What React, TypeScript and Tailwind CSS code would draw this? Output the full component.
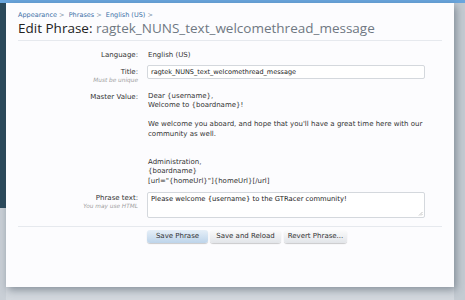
import React from "react";

const masterLines: string[] = [
  "Dear {username},",
  "Welcome to {boardname}!",
  "",
  "We welcome you aboard, and hope that you'll have a great time here with our",
  "community as well.",
  "",
  "",
  "Administration,",
  "{boardname}",
  '[url="{homeUrl}"]{homeUrl}[/url]',
];

const Row: React.FC<{
  label: string;
  hint?: string;
  children: React.ReactNode;
  className?: string;
  labelClass?: string;
}> = ({ label, hint, children, className, labelClass }) => (
  <div className={"flex pr-[17px] " + (className || "")}>
    <div className={"w-[129px] shrink-0 pr-[9px] text-right " + (labelClass || "")}>
      <div className="text-[7px] leading-[10px] text-[#333]">{label}</div>
      {hint && <div className="text-[5.8px] leading-[7px] italic text-[#a0a0a0]">{hint}</div>}
    </div>
    <div className="flex-1">{children}</div>
  </div>
);

const Button: React.FC<{ primary?: boolean; className?: string; children: React.ReactNode }> = ({
  primary,
  className,
  children,
}) => (
  <button
    className={
      "h-[13px] rounded-[3px] text-[7px] text-[#333] shadow-[0_1px_1px_rgba(0,0,0,0.2)] bg-gradient-to-b " +
      (primary ? "from-[#e6eff8] to-[#bdd4ea] " : "from-[#fbfbfb] to-[#e2e5e9] ") +
      (className || "")
    }
  >
    {children}
  </button>
);

const App: React.FC = () => {
  return (
    <div className="flex flex-col w-[465px] h-[300px] overflow-hidden bg-[#d3d8de] font-['DejaVu_Sans',sans-serif]">
      <div className="h-[3px] shrink-0 bg-[#6aa6de]" />
      <div className="flex flex-1">
        {/* page behind the overlay */}
        <div className="flex flex-col w-[6px] shrink-0">
          <div className="h-[205px] bg-[#2c4a5c]" />
          <div className="flex-1 bg-[#c9cfd6]" />
        </div>

        <div className="relative z-10 w-[448px] h-[284px] shrink-0 bg-[#fcfcfe] shadow-[2px_3px_8px_rgba(40,55,70,0.45)] px-[12px]">
          <div className="pt-[8px] text-[6.5px] leading-[9px] text-[#3b6fa6]">
            Appearance <span className="text-[#7a8ea3]">&gt;</span>&nbsp; Phrases{" "}
            <span className="text-[#7a8ea3]">&gt;</span>&nbsp; English (US){" "}
            <span className="text-[#7a8ea3]">&gt;</span>
          </div>
          <h1 className="font-['Open_Sans',sans-serif] text-[13.5px] leading-[17px] text-[#222] border-b border-[#e6e9ee] pb-[3px] whitespace-nowrap">
            Edit Phrase: <span className="text-[#6f7882]">ragtek_NUNS_text_welcomethread_message</span>
          </h1>

          <Row label="Language:" className="mt-[9px]">
            <div className="pl-[1px] text-[7px] leading-[10px] text-[#333]">English (US)</div>
          </Row>

          <Row label="Title:" hint="Must be unique" className="mt-[5px]" labelClass="pt-[2px]">
            <div className="h-[14px] border border-[#d4d8dd] rounded-[2px] bg-white px-[3px] text-[6.5px] leading-[12px] text-[#222]">
              ragtek_NUNS_text_welcomethread_message
            </div>
          </Row>

          <Row label="Master Value:" className="mt-[8px]">
            <div className="pl-[1px] text-[7px] leading-[9.4px] text-[#333]">
              {masterLines.map((l, i) => (
                <div key={i} className="h-[9.4px] whitespace-nowrap">
                  {l}
                </div>
              ))}
            </div>
          </Row>

          <Row label="Phrase text:" hint="You may use HTML" className="mt-[6px]" labelClass="pt-[1px]">
            <div className="relative h-[26px] border border-[#d4d8dd] rounded-[2px] bg-white px-[3px] pt-[2px] text-[6.8px] leading-[8px] text-[#222]">
              Please welcome {"{username}"} to the GTRacer community!
              <svg className="absolute right-[1px] bottom-[1px]" width="5" height="5" viewBox="0 0 5 5">
                <path d="M4.5 1 L1 4.5 M4.5 3 L3 4.5" stroke="#aaa" strokeWidth="0.7" />
              </svg>
            </div>
          </Row>

          <div className="mt-[8px] border-t border-[#e6e9ee]" />

          <div className="flex gap-[2px] pl-[129px] mt-[3px]">
            <Button primary className="w-[61px]">
              Save Phrase
            </Button>
            <Button className="w-[71px]">Save and Reload</Button>
            <Button className="ml-[1px] w-[63px]">Revert Phrase...</Button>
          </div>
        </div>

        <div className="flex-1 bg-[#c4cbd2]" />
      </div>
    </div>
  );
};

export default App;
